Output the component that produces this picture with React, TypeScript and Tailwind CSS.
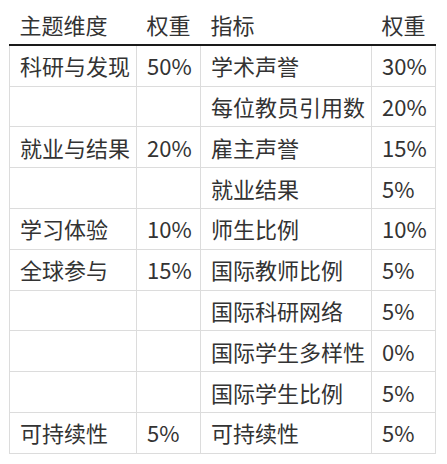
const rows: [string, string, string, string][] = [
  ["科研与发现", "50%", "学术声誉", "30%"],
  ["", "", "每位教员引用数", "20%"],
  ["就业与结果", "20%", "雇主声誉", "15%"],
  ["", "", "就业结果", "5%"],
  ["学习体验", "10%", "师生比例", "10%"],
  ["全球参与", "15%", "国际教师比例", "5%"],
  ["", "", "国际科研网络", "5%"],
  ["", "", "国际学生多样性", "0%"],
  ["", "", "国际学生比例", "5%"],
  ["可持续性", "5%", "可持续性", "5%"],
];

const th = "text-left font-normal pl-[10px] pr-[7px] py-[4.5px] leading-[30.8px] whitespace-nowrap";
const td = "border border-[#dcdcdc] pl-[10px] pr-[7px] py-[4.5px] leading-[30.8px] whitespace-nowrap";

export default function App() {
  return (
    <div
      className="w-[447px] h-[464px] bg-white pt-[4px] pl-[9px] text-[#333333] text-[22px]"
      style={{ fontFamily: '"Noto Sans CJK SC", "Noto Sans", sans-serif' }}
    >
      <table className="table-fixed border-collapse w-[427px]">
        <colgroup>
          <col className="w-[127px]" />
          <col className="w-[64px]" />
          <col className="w-[171px]" />
          <col className="w-[64px]" />
        </colgroup>
        <thead>
          <tr className="border-b-2 border-[#1a1a1a]">
            <th className={th}>主题维度</th>
            <th className={th}>权重</th>
            <th className={th}>指标</th>
            <th className={th}>权重</th>
          </tr>
        </thead>
        <tbody>
          {rows.map((r, i) => (
            <tr key={i}>
              {r.map((c, j) => (
                <td key={j} className={td}>
                  {c}
                </td>
              ))}
            </tr>
          ))}
        </tbody>
      </table>
    </div>
  );
}
